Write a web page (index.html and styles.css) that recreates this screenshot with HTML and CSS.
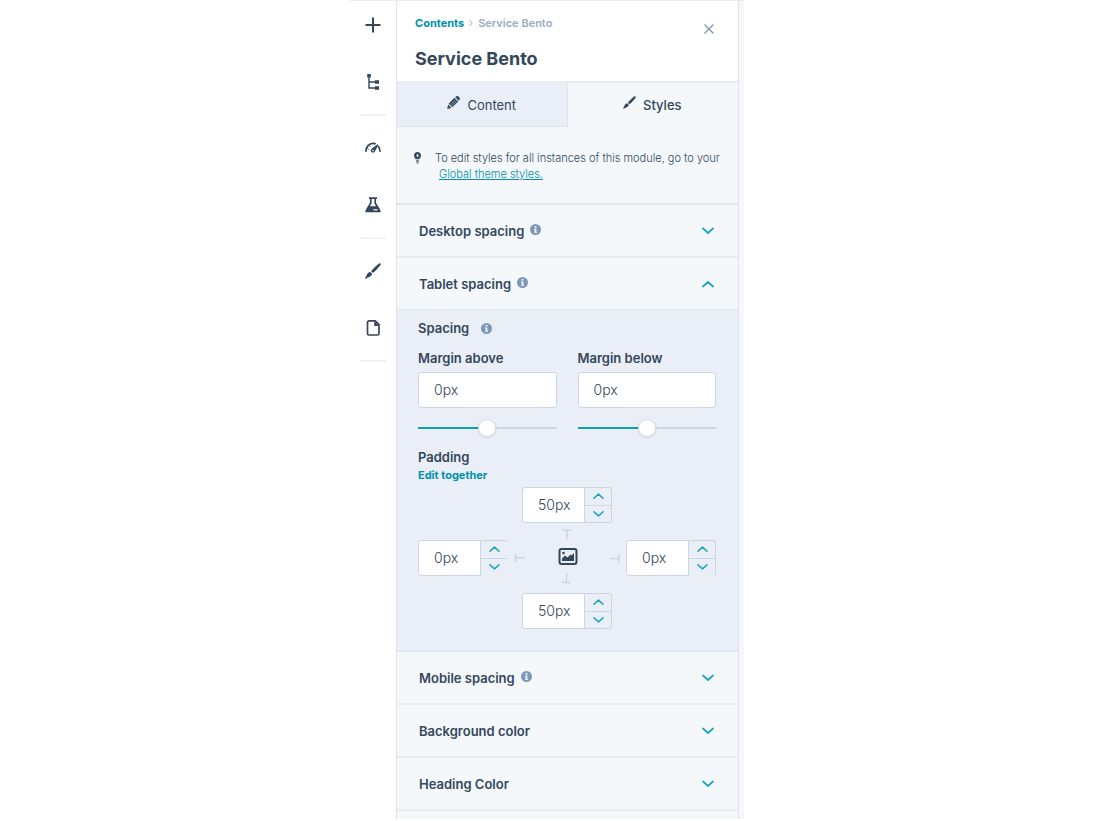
FILE: index.html
```html
<!DOCTYPE html>
<html lang="en">
<head>
  <meta charset="UTF-8">
  <meta name="viewport" content="width=device-width, initial-scale=1">
  <title>Service Bento - Styles</title>
  <link rel="stylesheet" href="styles.css">
</head>
<body>

  <!-- shared icons -->
  <svg class="sprite" aria-hidden="true">
    <symbol id="info" viewBox="0 0 12 12">
      <circle cx="6" cy="6" r="6" fill="#7c98b6"/>
      <path d="M5 2.2h2v1.700H5zM4.400 5H7v3.600h.7v1H4.300v-1H5V6h-.6z" fill="#f5f8fa"/>
    </symbol>
    <symbol id="chevron" viewBox="0 0 12 8">
      <path d="M1 1.500l5 4.500 5-4.500" fill="none" stroke="#1ba5bc" stroke-width="1.700" stroke-linecap="round" stroke-linejoin="round"/>
    </symbol>
    <symbol id="brush" viewBox="0 0 16 16">
      <path d="M14 .4c1.100-.6 2.200.5 1.500 1.600-1.500 2.200-4.800 5.700-7.500 8L6.100 8.100C8.500 5.400 12 1.800 14 .4z" fill="#33475b"/>
      <path d="M5.300 9l1.800 1.800c-.2 1.700-1.200 2.300-2.500 2.900L.6 15.800c-.4.100-.6-.1-.5-.5l2-4C2.700 10.100 3.600 9.200 5.300 9z" fill="#33475b"/>
    </symbol>
  </svg>

  <div class="editor">
    <nav class="rail">
      <div class="rail-group">
        <button type="button" aria-label="Add">
          <svg width="16" height="16" viewBox="0 0 16 16"><path d="M8 .5v15M.5 8h15" stroke="#33475b" stroke-width="2"/></svg>
        </button>
        <button type="button" aria-label="Contents">
          <svg width="16" height="16" viewBox="0 0 16 16"><path d="M4 2v12h8M4 8h8" fill="none" stroke="#33475b" stroke-width="1.400"/><path d="M2.200 0h3.600v3.600H2.200zM10 6.200h4v3.600h-4zM10 12.200h4v3.600h-4z" fill="#33475b"/></svg>
        </button>
      </div>
      <div class="rail-group">
        <button type="button" aria-label="Optimize">
          <svg width="16" height="16" viewBox="0 0 16 16"><path d="M1 11.800C.8 6.500 4.300 3.400 8 3.400c1.200 0 2 .2 2.700.5M13.200 6c1.200 1.500 1.800 3.500 1.800 5.800" fill="none" stroke="#33475b" stroke-width="1.800"/><path d="M12.500 4.200l.8.7-3 5.900c-.7 1.700-2.200 2.300-3.400 1.500S5.200 9.800 6.500 8.700z" fill="#33475b"/><circle cx="8" cy="10.500" r=".8" fill="#fff"/><path d="M2.500 8.500l1.200.7M4.800 5.700l.8 1" stroke="#33475b"/></svg>
        </button>
        <button type="button" aria-label="Test">
          <svg width="16" height="16" viewBox="0 0 16 16"><path d="M4 1.200h8M5.800 1.500v4.800L1.600 13M10.200 1.500v4.800l4.200 6.700" fill="none" stroke="#33475b" stroke-width="1.700"/><path d="M3.600 9.300h8.800l3.300 4.700c.3.600 0 1.200-.7 1.200H1c-.7 0-1-.6-.7-1.200z" fill="#33475b"/><path d="M8.500 12.800h4" stroke="#fff" stroke-width="1.200"/></svg>
        </button>
      </div>
      <div class="rail-group">
        <button type="button" aria-label="Theme">
          <svg width="16" height="16"><use href="#brush"/></svg>
        </button>
        <button type="button" aria-label="Page">
          <svg width="16" height="16" viewBox="0 0 16 16"><path d="M4 .9h6.200L14 4.700v8.800c0 .9-.6 1.500-1.500 1.500H4c-.9 0-1.500-.6-1.500-1.500V2.400C2.500 1.500 3.100.9 4 .9z" fill="none" stroke="#33475b" stroke-width="1.700"/><path d="M9.200 1v5H14z" fill="#33475b"/></svg>
        </button>
      </div>
    </nav>

    <main class="panel">
      <header class="panel-header">
        <div>
          <div class="crumbs">
            <a href="#">Contents</a>
            <svg width="4" height="8" viewBox="0 0 4 8"><path d="M.5 1l2.800 3L.5 7" fill="none" stroke="#99acc2"/></svg>
            <span>Service Bento</span>
          </div>
          <h1>Service Bento</h1>
        </div>
        <button class="close" type="button" aria-label="Close">
          <svg width="10" height="10" viewBox="0 0 10 10"><path d="M.5.5l9 9M9.500.5l-9 9" stroke="#7c98b6" stroke-width="1.400"/></svg>
        </button>
      </header>

      <div class="tabs">
        <button class="tab" type="button">
          <svg width="13" height="13" viewBox="0 0 12 12"><path d="M7.600 1L8.700.3c.6-.4 1.200-.4 1.700.1l1.200 1.200c.5.500.5 1.100 0 1.700l-.9 1.100zM6.900 1.600l3.500 3.500-5.600 5.300L1.500 7.100zM1 7.900l3.100 3.100-3.900 1z" fill="#33475b"/><path d="M2.900 8.300l5.200-5M4 9.300l5.200-5" stroke="#eaeef6" stroke-width=".4"/></svg>
          Content
        </button>
        <button class="tab active" type="button">
          <svg width="13" height="13"><use href="#brush"/></svg>
          Styles
        </button>
      </div>

      <div class="notice">
        <svg width="7" height="12" viewBox="0 0 7 12"><path d="M3.500 0C1.500 0 0 1.400 0 3.400c0 1.400 1.200 2.400 1.600 3.900h3.800C5.800 5.800 7 4.800 7 3.400 7 1.400 5.500 0 3.500 0z" fill="#33475b"/><path d="M3.500 1.800l1.200 1.800-1.200 2-1.200-2z" fill="#dfe6ee"/><path d="M1.800 8h3.400l-.8 3.200c-.4.900-1.400.9-1.800 0z" fill="#7c8c9b"/></svg>
        <div>
          <p>To edit styles for all instances of this module, go to your</p>
          <a href="#">Global theme styles.</a>
        </div>
      </div>

      <button class="row" type="button">
        Desktop spacing
        <svg class="info" width="11" height="11"><use href="#info"/></svg>
        <svg class="arrow" width="12" height="8"><use href="#chevron"/></svg>
      </button>
      <button class="row" type="button" aria-expanded="true">
        Tablet spacing
        <svg class="info" width="11" height="11"><use href="#info"/></svg>
        <svg class="arrow up" width="12" height="8"><use href="#chevron"/></svg>
      </button>

      <section class="spacing">
        <h2>Spacing <svg width="11" height="11"><use href="#info"/></svg></h2>

        <div class="margins">
          <div class="field">
            <label for="marginAbove">Margin above</label>
            <input type="text" id="marginAbove" value="0px">
            <input type="range" min="-100" max="100" value="0" aria-label="Margin above slider">
          </div>
          <div class="field">
            <label for="marginBelow">Margin below</label>
            <input type="text" id="marginBelow" value="0px">
            <input type="range" min="-100" max="100" value="0" aria-label="Margin below slider">
          </div>
        </div>

        <h2>Padding</h2>
        <a class="edit-link" href="#">Edit together</a>

        <div class="padding-grid">
          <div class="stepper top">
            <input type="text" value="50px" aria-label="Padding top">
            <div class="steps">
              <button type="button" aria-label="Increase"><svg class="up" width="11" height="8"><use href="#chevron"/></svg></button>
              <button type="button" aria-label="Decrease"><svg width="11" height="8"><use href="#chevron"/></svg></button>
            </div>
          </div>
          <div class="stepper left">
            <input type="text" value="0px" aria-label="Padding left">
            <div class="steps">
              <button type="button" aria-label="Increase"><svg class="up" width="11" height="8"><use href="#chevron"/></svg></button>
              <button type="button" aria-label="Decrease"><svg width="11" height="8"><use href="#chevron"/></svg></button>
            </div>
          </div>
          <div class="module">
            <svg width="106" height="60" viewBox="0 0 106 60">
              <path d="M48.500 2h9M53 2v10M48 54.500h9M52.500 45v9.500M1.500 25.500v9M1.500 30H11M96 30.500h9M105 26v9" fill="none" stroke="#cbd6e2" stroke-width="1.500"/>
              <rect x="45.500" y="21" width="17" height="15" rx="2" fill="none" stroke="#33475b" stroke-width="2"/>
              <path d="M48 33v-2.500l3-3 2.500 2 3-3 1 1 2.500-2.500V33z" fill="#33475b"/>
              <circle cx="49.500" cy="25" r="1.300" fill="#33475b"/>
            </svg>
          </div>
          <div class="stepper right">
            <input type="text" value="0px" aria-label="Padding right">
            <div class="steps">
              <button type="button" aria-label="Increase"><svg class="up" width="11" height="8"><use href="#chevron"/></svg></button>
              <button type="button" aria-label="Decrease"><svg width="11" height="8"><use href="#chevron"/></svg></button>
            </div>
          </div>
          <div class="stepper bottom">
            <input type="text" value="50px" aria-label="Padding bottom">
            <div class="steps">
              <button type="button" aria-label="Increase"><svg class="up" width="11" height="8"><use href="#chevron"/></svg></button>
              <button type="button" aria-label="Decrease"><svg width="11" height="8"><use href="#chevron"/></svg></button>
            </div>
          </div>
        </div>
      </section>

      <button class="row" type="button">
        Mobile spacing
        <svg class="info" width="11" height="11"><use href="#info"/></svg>
        <svg class="arrow" width="12" height="8"><use href="#chevron"/></svg>
      </button>
      <button class="row" type="button">
        Background color
        <svg class="arrow" width="12" height="8"><use href="#chevron"/></svg>
      </button>
      <button class="row" type="button">
        Heading Color
        <svg class="arrow" width="12" height="8"><use href="#chevron"/></svg>
      </button>
    </main>
  </div>

</body>
</html>
```
FILE: styles.css
```css
* {
  box-sizing: border-box;
}
body {
  margin: 0;
  background: #fff;
  color: #33475b;
  font-family: Inter, "Open Sans", sans-serif;
  font-size: 13px;
  line-height: 18px;
}
button, input {
  font: inherit;
  color: inherit;
}
button {
  border: 0;
  padding: 0;
  background: none;
  cursor: pointer;
}
svg {
  display: block;
  flex: none;
}
a {
  color: #0091ae;
}
h1, h2, p {
  margin: 0;
}
.sprite {
  position: absolute;
  width: 0;
  height: 0;
}
.up {
  transform: rotate(180deg);
}

.editor {
  display: flex;
  max-width: 394px;
  margin: 0 auto;
  padding-right: 5px;
  border-top: 1px solid #eaecf2;
  background: #f5f8fa;
}

/* left icon rail */
.rail {
  flex: none;
  width: 46px;
  padding: 16px 10px 0;
  background: #fff;
}
.rail-group {
  display: flex;
  flex-direction: column;
  align-items: center;
  gap: 41px;
  padding-bottom: 24px;
  border-bottom: 2px solid #eff2f6;
}
.rail-group + .rail-group {
  padding-top: 24px;
}

.panel {
  flex: 1;
  min-width: 0;
  padding-bottom: 8px;
  border: solid #dfe3eb;
  border-width: 0 1px;
  background: #f4f8fb;
}
.panel-header {
  display: flex;
  justify-content: space-between;
  align-items: flex-start;
  padding: 14px 19px 10px 18px;
  border-bottom: 2px solid #e9edf2;
  background: #fff;
}
.crumbs {
  display: flex;
  align-items: center;
  gap: 5px;
  font-size: 11px;
  font-weight: 600;
  line-height: 16px;
  color: #99acc2;
}
.crumbs a {
  font-weight: 700;
  text-decoration: none;
}
h1 {
  margin-top: 16px;
  font-size: 18px;
  font-weight: 700;
  line-height: 24px;
}
.close {
  padding: 9px 5px;
}

.tabs {
  display: grid;
  grid-template-columns: 1fr 1fr;
}
.tab {
  display: flex;
  justify-content: center;
  align-items: center;
  gap: 7px;
  height: 44px;
  border: solid #dfe3eb;
  border-width: 0 1px 1px 0;
  background: #eaeef6;
}
.tab svg {
  margin-bottom: 4px;
}
.tab.active {
  border-color: transparent;
  background: none;
  font-weight: 500;
}

.notice {
  display: flex;
  gap: 14px;
  padding: 23px 8px 21px 17px;
  border-bottom: 2px solid #dfe6ee;
  font-size: 11px;
  font-weight: 300;
  line-height: 16px;
}
.notice svg {
  margin-top: 2px;
}
.notice a {
  display: table;
  margin-left: 4px;
}

.row {
  display: flex;
  align-items: center;
  width: 100%;
  height: 53px;
  padding: 0 24px 0 22px;
  border-bottom: 2px solid #e7ecf0;
  font-weight: 600;
}
.row .info {
  margin: 0 0 3px 6px;
}
.row .arrow {
  margin-left: auto;
}

.spacing {
  padding: 8px 22px 21px 21px;
  border-bottom: 2px solid #e2e7ef;
  background: #eaeef6;
}
h2 {
  display: flex;
  align-items: center;
  gap: 12px;
  font-size: 13px;
  font-weight: 600;
}
.margins {
  display: grid;
  grid-template-columns: 1fr 1fr;
  gap: 21px;
  margin: 12px 0 11px;
}
.field label {
  display: block;
  margin-bottom: 5px;
  font-weight: 600;
}
input[type="text"] {
  display: block;
  width: 100%;
  min-width: 0;
  height: 36px;
  padding: 0 15px 2px;
  border: 1px solid #cbd6e2;
  border-radius: 3px;
  background: #fff;
  font-size: 14px;
  font-weight: 300;
}
input[type="range"] {
  appearance: none;
  display: block;
  width: 100%;
  height: 18px;
  margin: 11px 0 0;
  background: linear-gradient(to right, #0f9fb8 50%, #cbd6e2 50%) center / 100% 2px no-repeat;
}
input[type="range"]::-webkit-slider-thumb {
  appearance: none;
  width: 18px;
  height: 18px;
  border: 1px solid #d5dde7;
  border-radius: 50%;
  background: #fff;
  box-shadow: 0 1px 2px rgba(51, 71, 91, 0.15);
}
.edit-link {
  display: block;
  font-size: 11px;
  font-weight: 700;
  text-decoration: none;
}

/* padding box: one stepper per side around the module icon */
.padding-grid {
  display: grid;
  grid-template-columns: repeat(3, minmax(0, 1fr));
  gap: 17px 14px;
  margin-top: 3px;
}
.top, .bottom {
  grid-column: 2;
}
.left {
  grid-column: 1;
}
.module {
  display: flex;
  justify-content: center;
  align-items: center;
  height: 36px;
}
.stepper {
  display: flex;
}
.stepper input[type="text"] {
  flex: 1;
  padding-right: 0;
  border-radius: 3px 0 0 3px;
}
.steps {
  display: grid;
  flex: none;
  width: 27px;
  border: 1px solid #cbd6e2;
  border-left: 0;
  border-radius: 0 3px 3px 0;
}
.steps button {
  display: flex;
  justify-content: center;
  align-items: center;
}
.steps button + button {
  border-top: 1px solid #cbd6e2;
}
.left .steps {
  border-right-color: transparent;
  border-bottom-color: transparent;
}
.right .steps {
  border-bottom-color: transparent;
}
```
